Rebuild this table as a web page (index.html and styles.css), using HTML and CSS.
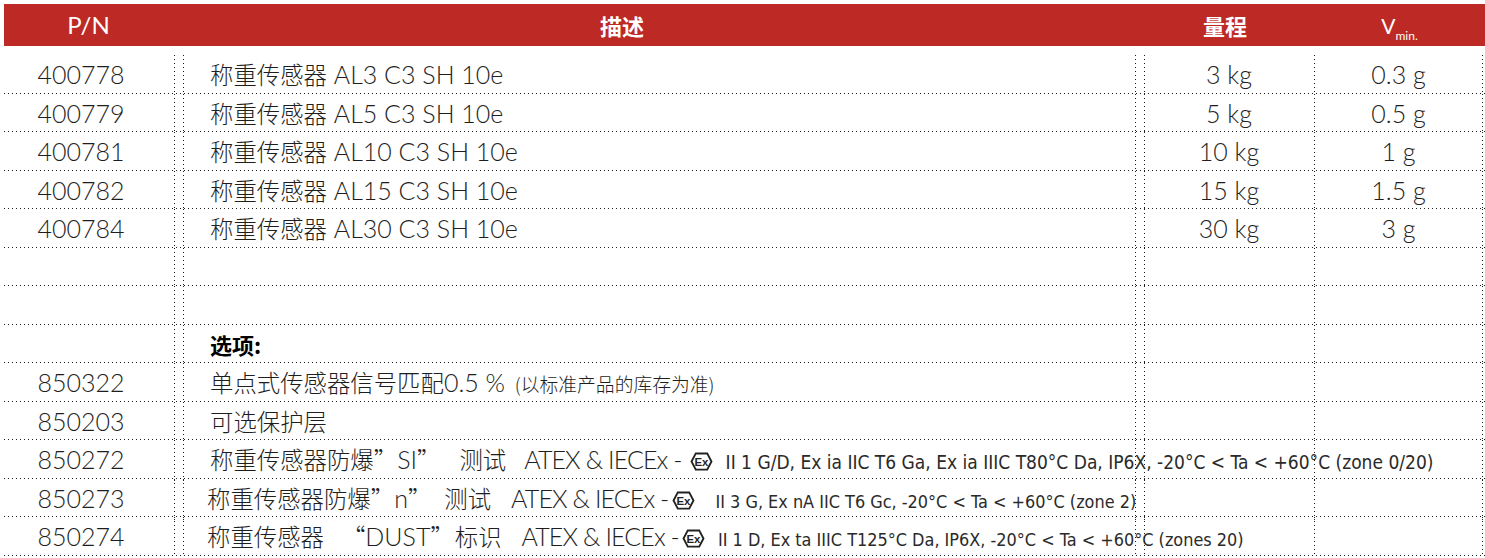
FILE: index.html
```html
<!DOCTYPE html>
<html lang="zh-CN">
<head>
<meta charset="utf-8">
<title>称重传感器</title>
<link rel="stylesheet" href="styles.css">
</head>
<body>
<div class="sheet">
  <div class="head">
    <div class="hc c1">P/N</div>
    <div class="hc c2"><span class="zhb">描述</span></div>
    <div class="hc c3"><span class="zhb">量程</span></div>
    <div class="hc c4"><span class="v">V</span><span class="sub">min.</span></div>
  </div>
  <div class="table">
    <div class="row">
      <div class="cell pn">400778</div>
      <div class="cell desc"><span class="zh">称重传感器</span> AL3 C3 SH 10e</div>
      <div class="cell rng">3 kg</div>
      <div class="cell vmin">0.3 g</div>
    </div>
    <div class="row">
      <div class="cell pn">400779</div>
      <div class="cell desc"><span class="zh">称重传感器</span> AL5 C3 SH 10e</div>
      <div class="cell rng">5 kg</div>
      <div class="cell vmin">0.5 g</div>
    </div>
    <div class="row">
      <div class="cell pn">400781</div>
      <div class="cell desc"><span class="zh">称重传感器</span> AL10 C3 SH 10e</div>
      <div class="cell rng">10 kg</div>
      <div class="cell vmin">1 g</div>
    </div>
    <div class="row">
      <div class="cell pn">400782</div>
      <div class="cell desc"><span class="zh">称重传感器</span> AL15 C3 SH 10e</div>
      <div class="cell rng">15 kg</div>
      <div class="cell vmin">1.5 g</div>
    </div>
    <div class="row">
      <div class="cell pn">400784</div>
      <div class="cell desc"><span class="zh">称重传感器</span> AL30 C3 SH 10e</div>
      <div class="cell rng">30 kg</div>
      <div class="cell vmin">3 g</div>
    </div>
    <div class="row">
      <div class="cell pn"></div>
      <div class="cell desc"></div>
      <div class="cell rng"></div>
      <div class="cell vmin"></div>
    </div>
    <div class="row">
      <div class="cell pn"></div>
      <div class="cell desc"></div>
      <div class="cell rng"></div>
      <div class="cell vmin"></div>
    </div>
    <div class="row">
      <div class="cell pn"></div>
      <div class="cell desc"><span class="opt">选项:</span></div>
      <div class="cell rng"></div>
      <div class="cell vmin"></div>
    </div>
    <div class="row">
      <div class="cell pn">850322</div>
      <div class="cell desc"><span class="zh">单点式传感器信号匹配</span>0.5 % <span class="note">(以标准产品的库存为准)</span></div>
      <div class="cell rng"></div>
      <div class="cell vmin"></div>
    </div>
    <div class="row">
      <div class="cell pn">850203</div>
      <div class="cell desc"><span class="zh">可选保护层</span></div>
      <div class="cell rng"></div>
      <div class="cell vmin"></div>
    </div>
    <div class="row">
      <div class="cell pn">850272</div>
      <div class="cell desc"><span class="zh">称重传感器防爆”</span>SI<span class="zh">”</span><span class="zh test t1">测试</span><span class="atex a1">ATEX &amp; IECEx -</span><svg class="ex" viewBox="0 0 24 20" width="23" height="19"><polygon points="6,1.5 18,1.5 22.5,10 18,18.5 6,18.5 1.5,10" fill="none" stroke="#222" stroke-width="2"/><text x="12" y="14.5" text-anchor="middle" font-size="12" font-weight="700" font-family="Liberation Sans, sans-serif" fill="#222">Ex</text></svg><span class="small s1">II 1 G/D, Ex ia IIC T6 Ga, Ex ia IIIC T80°C Da, IP6X, -20°C &lt; Ta &lt; +60°C (zone 0/20)</span></div>
      <div class="cell rng"></div>
      <div class="cell vmin"></div>
    </div>
    <div class="row">
      <div class="cell pn">850273</div>
      <div class="cell desc shift"><span class="zh">称重传感器防爆”</span>n<span class="zh">”</span><span class="zh test t2">测试</span><span class="atex a2">ATEX &amp; IECEx -</span><svg class="ex e2" viewBox="0 0 24 20" width="23" height="19"><polygon points="6,1.5 18,1.5 22.5,10 18,18.5 6,18.5 1.5,10" fill="none" stroke="#222" stroke-width="2"/><text x="12" y="14.5" text-anchor="middle" font-size="12" font-weight="700" font-family="Liberation Sans, sans-serif" fill="#222">Ex</text></svg><span class="small s2">II 3 G, Ex nA IIC T6 Gc, -20°C &lt; Ta &lt; +60°C (zone 2)</span></div>
      <div class="cell rng"></div>
      <div class="cell vmin"></div>
    </div>
    <div class="row">
      <div class="cell pn">850274</div>
      <div class="cell desc shift"><span class="zh">称重传感器</span><span class="zh q3">“</span>DUST<span class="zh">”</span><span class="zh test t3">标识</span><span class="atex a3">ATEX &amp; IECEx -</span><svg class="ex e3" viewBox="0 0 24 20" width="23" height="19"><polygon points="6,1.5 18,1.5 22.5,10 18,18.5 6,18.5 1.5,10" fill="none" stroke="#222" stroke-width="2"/><text x="12" y="14.5" text-anchor="middle" font-size="12" font-weight="700" font-family="Liberation Sans, sans-serif" fill="#222">Ex</text></svg><span class="small s2">II 1 D, Ex ta IIIC T125°C Da, IP6X, -20°C &lt; Ta &lt; +60°C (zones 20)</span></div>
      <div class="cell rng"></div>
      <div class="cell vmin"></div>
    </div>
  </div>
</div>
</body>
</html>
```

FILE: styles.css
```css
:root {
  --red: #bd2a25;
  --dot: #1e1e1e;
  --ink: #1e1e1e;
}
* { box-sizing: border-box; }
html, body { margin: 0; padding: 0; background: #fff; }
body {
  font-family: Lato, "Noto Sans CJK SC", sans-serif;
  font-weight: 300;
  color: var(--ink);
}
.sheet {
  padding: 4px 0 0 4px;
  width: 1485px;
}
.head {
  display: grid;
  grid-template-columns: 171px 969px 170px 169px;
  height: 42px;
  background: var(--red);
  color: #fff;
}
.hc {
  text-align: center;
  font-size: 24px;
  font-weight: 400;
  line-height: 42px;
  white-space: nowrap;
}
.head .c1 { padding-right: 2px; }
.head .c2 { padding-right: 75px; }
.head .c3 { padding-right: 8px; }
.zhb {
  font-family: "Noto Sans CJK SC", sans-serif;
  font-weight: 700;
  font-size: 22px;
}
.head .c4 { padding-left: 2px; }
.v { font-size: 21px; }
.sub { font-size: 12px; position: relative; top: 6px; }

.table {
  margin-top: 9px;
}
.row {
  display: grid;
  grid-template-columns: 171px 969px 170px 169px;
  height: 38.5px;
  background-image: linear-gradient(to right, var(--dot) 1px, transparent 1px);
  background-size: 4px 1px;
  background-repeat: repeat-x;
  background-position: left bottom;
}
.cell {
  font-size: 25px;
  line-height: 38px;
  white-space: nowrap;
}
.pn {
  text-align: center;
  padding-right: 17px;
  background-image: linear-gradient(to bottom, var(--dot) 1px, transparent 1px);
  background-size: 1px 4px;
  background-repeat: repeat-y;
  background-position: right top;
}
.desc {
  margin: 0 8px;
  padding-left: 27px;
  background-image:
    linear-gradient(to bottom, var(--dot) 1px, transparent 1px),
    linear-gradient(to bottom, var(--dot) 1px, transparent 1px);
  background-size: 1px 4px, 1px 4px;
  background-repeat: repeat-y, repeat-y;
  background-position: left top, right top;
}
.desc.shift { padding-left: 24px; }
.rng, .vmin {
  text-align: center;
  background-image: linear-gradient(to bottom, var(--dot) 1px, transparent 1px);
  background-size: 1px 4px;
  background-repeat: repeat-y;
  background-position: left top;
}
.vmin {
  background-image:
    linear-gradient(to bottom, var(--dot) 1px, transparent 1px),
    linear-gradient(to bottom, var(--dot) 1px, transparent 1px);
  background-size: 1px 4px, 1px 4px;
  background-repeat: repeat-y, repeat-y;
  background-position: left top, right top;
}
.zh {
  font-family: "Noto Sans CJK SC", sans-serif;
  font-weight: 300;
  font-size: 23.4px;
}
.t1 { margin-left: 19px; }
.t2 { margin-left: 13px; }
.t3 { margin-left: 1px; }
.q3 { margin-left: 18px; }
.atex {
  letter-spacing: -0.9px;
  margin-left: 18px;
}
.a2 { margin-left: 20px; }
.a3 { margin-left: 20px; }
.opt {
  font-family: "Noto Sans CJK SC", sans-serif;
  font-weight: 700;
  font-size: 22px;
  color: #000;
}
.note {
  font-family: "Noto Sans CJK SC", sans-serif;
  font-weight: 300;
  font-size: 18.8px;
  margin-left: 3px;
}
.ex {
  vertical-align: -2px;
  margin: 0 13px 0 8px;
}
.e2 { margin: 0 20px 0 4px; }
.e3 { margin: 0 13px 0 3px; }
.small {
  font-family: "Liberation Sans Narrow", "DejaVu Sans Condensed", sans-serif;
  font-size: 19px;
  color: #2a2a2a;
}
.s2 { font-size: 17.9px; }
```
